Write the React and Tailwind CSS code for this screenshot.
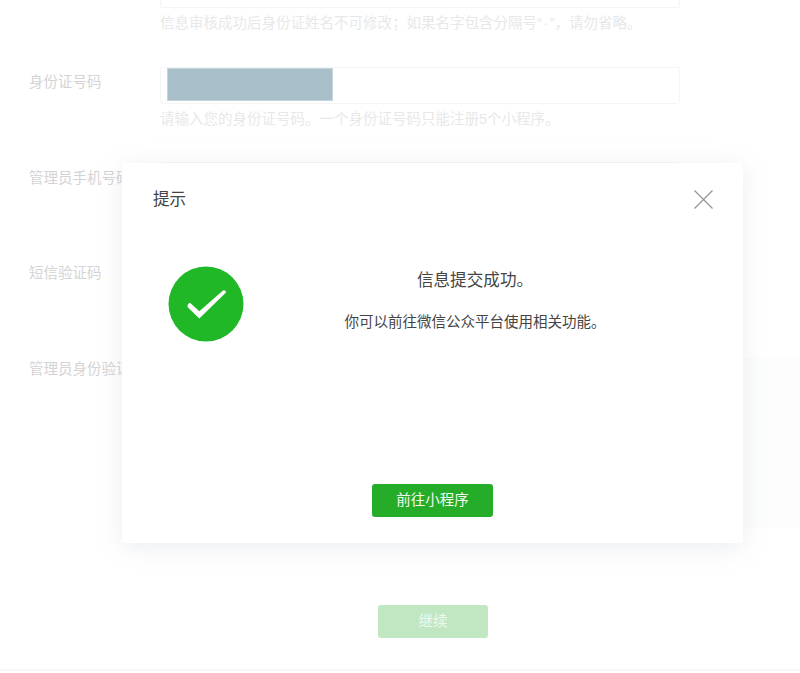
const font = "font-['Liberation_Sans','Noto_Sans_CJK_SC',sans-serif]";

const FormRow = ({ label, hint, masked, height = "h-[95px]", labelTop = "pt-[5px]" }) => {
  return (
    <div className={`flex pl-[29px] ${height}`}>
      <label className={`w-[131px] text-[14.5px] leading-[20px] whitespace-nowrap text-[#d4d4d4] ${labelTop}`}>
        {label}
      </label>
      <div className="w-[520px]">
        <div className="h-[37px] rounded-[3px] border border-[#f5f5f5] bg-white">
          {masked && <div className="ml-[6px] h-[33px] w-[166px] border border-[#c4d6dd] bg-[#a8bfca]" />}
        </div>
        {hint && <p className="mt-[5px] text-[14.5px] leading-[20px] whitespace-nowrap text-[#e8e8e8]">{hint}</p>}
      </div>
    </div>
  );
};

const SuccessDialog = () => {
  return (
    <div className="absolute left-[122px] top-[163px] flex h-[380px] w-[621px] flex-col rounded-[4px] bg-white shadow-[0_4px_24px_rgba(190,195,210,0.3)]">
      <header className="flex items-center justify-between pl-[31px] pr-[30px] pt-[27px]">
        <h2 className="text-[16.6px] leading-[20px] text-[#444]">提示</h2>
        <svg width="19" height="19" viewBox="0 0 19 19" className="mt-[-1px] text-[#949494]">
          <path d="M0.5 0.5 L18.5 18.5 M18.5 0.5 L0.5 18.5" stroke="currentColor" strokeWidth="1.2" fill="none" />
        </svg>
      </header>
      <div className="flex flex-1 pl-[46px] pt-[57px]">
        <svg width="76" height="76" viewBox="0 0 76 76" className="shrink-0 mt-[-1px]">
          <circle cx="38" cy="38" r="37.5" fill="#20b826" />
          <path d="M22 36.8 L31.3 45.3 L55 24.5 Q57.8 23.8 58 26.5 L31.3 52.5 L19.5 41 Q19 38 22 36.8 Z" fill="#fff" />
        </svg>
        <div className="ml-[31px] w-[400px] text-center">
          <p className="mt-[2px] text-[16.6px] leading-[24px] text-[#444]">信息提交成功。</p>
          <p className="mt-[19px] text-[14.5px] leading-[20px] text-[#444]">你可以前往微信公众平台使用相关功能。</p>
        </div>
      </div>
      <div className="flex justify-center pb-[26px]">
        <button className="h-[33px] w-[121px] rounded-[3px] bg-[#25ac29] text-[14.5px] text-[#f2faf2]">前往小程序</button>
      </div>
    </div>
  );
};

export default function App() {
  return (
    <div className={`relative h-[673px] w-[800px] overflow-hidden bg-white ${font}`}>
      <div className="flex h-[8px] items-end pl-[160px]">
        <div className="h-[8px] w-[520px] rounded-b-[3px] border border-t-0 border-[#f5f5f5]" />
      </div>
      <p className="ml-[160px] mt-[5px] h-[54px] text-[14.5px] leading-[20px] whitespace-nowrap text-[#e8e8e8]">
        信息审核成功后身份证姓名不可修改；如果名字包含分隔号“<span className="mx-[1.5px]">·</span>”，请勿省略。
      </p>
      <FormRow label="身份证号码" hint="请输入您的身份证号码。一个身份证号码只能注册5个小程序。" masked />
      <FormRow label="管理员手机号码" labelTop="pt-[6px]" height="h-[96px]" />
      <FormRow label="短信验证码" labelTop="pt-[5px]" />
      <div className="flex pl-[29px]">
        <label className="w-[131px] pt-[6px] text-[14.5px] leading-[20px] whitespace-nowrap text-[#d4d4d4]">管理员身份验证</label>
      </div>
      <div className="absolute right-0 top-[358px] h-[170px] w-[60px] bg-[#fcfdfc]" />
      <button className="absolute left-[378px] top-[605px] h-[33px] w-[110px] rounded-[3px] bg-[#c0e7c1] text-[14.5px] text-[#eef8ee]">
        继续
      </button>
      <div className="absolute inset-x-0 top-[669px] h-[2px] bg-[#f7f7f7]" />
      <SuccessDialog />
    </div>
  );
}
